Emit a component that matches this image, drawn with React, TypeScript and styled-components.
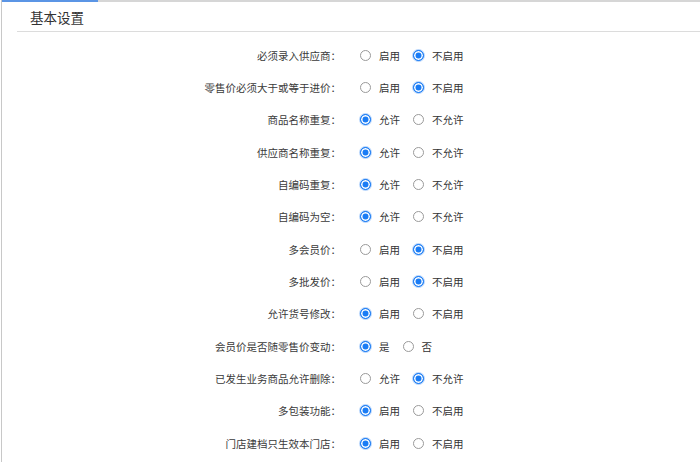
import React from "react";
import styled, { createGlobalStyle } from "styled-components";

const GlobalStyle = createGlobalStyle`
  html, body {
    margin: 0;
    padding: 0;
    background: #fff;
  }
  body {
    font-family: "Microsoft YaHei", "Noto Sans CJK SC", "Liberation Sans", sans-serif;
    color: #333;
  }
`;

interface Setting {
  label: string;
  options: string[];
  checked: number;
}

const settings: Setting[] = [
  { label: "必须录入供应商：", options: ["启用", "不启用"], checked: 1 },
  { label: "零售价必须大于或等于进价：", options: ["启用", "不启用"], checked: 1 },
  { label: "商品名称重复：", options: ["允许", "不允许"], checked: 0 },
  { label: "供应商名称重复：", options: ["允许", "不允许"], checked: 0 },
  { label: "自编码重复：", options: ["允许", "不允许"], checked: 0 },
  { label: "自编码为空：", options: ["允许", "不允许"], checked: 0 },
  { label: "多会员价：", options: ["启用", "不启用"], checked: 1 },
  { label: "多批发价：", options: ["启用", "不启用"], checked: 1 },
  { label: "允许货号修改：", options: ["启用", "不启用"], checked: 0 },
  { label: "会员价是否随零售价变动：", options: ["是", "否"], checked: 0 },
  { label: "已发生业务商品允许删除：", options: ["允许", "不允许"], checked: 1 },
  { label: "多包装功能：", options: ["启用", "不启用"], checked: 0 },
  { label: "门店建档只生效本门店：", options: ["启用", "不启用"], checked: 0 },
];

const App = () => {
  return (
    <>
      <GlobalStyle />
      <Panel>
        <TabBar>
          <ActiveTab />
        </TabBar>
        <Header>
          <Title>基本设置</Title>
        </Header>
        <Form>
          {settings.map((s) => (
            <Row key={s.label}>
              <Label>{s.label}</Label>
              <Options>
                {s.options.map((o, i) => (
                  <Option key={o}>
                    <Radio checked={i === s.checked} />
                    <OptionText>{o}</OptionText>
                  </Option>
                ))}
              </Options>
            </Row>
          ))}
        </Form>
      </Panel>
    </>
  );
};

export default App;

const Panel = styled.div`
  width: 700px;
  height: 462px;
  box-sizing: border-box;
  border-left: 1px solid #c8c8c8;
  margin-left: 1px;
  overflow: hidden;
`;

const TabBar = styled.div`
  height: 2px;
  background: #d6d6d6;
  display: flex;
`;

const ActiveTab = styled.div`
  width: 96px;
  height: 2px;
  background: #5b95e5;
`;

const Header = styled.div`
  margin-left: 15px;
  height: 29px;
  border-bottom: 1px solid #dcdcdc;
  display: flex;
  align-items: center;
`;

const Title = styled.span`
  margin-left: 13px;
  font-size: 13.5px;
  color: #333;
  line-height: 1;
  padding-top: 2px;
`;

const Form = styled.div`
  padding-top: 7px;
  display: flex;
  flex-direction: column;
`;

const Row = styled.div`
  height: 32.35px;
  display: grid;
  grid-template-columns: 339px 1fr;
  align-items: center;
`;

const Label = styled.span`
  text-align: right;
  font-size: 10.5px;
  color: #3a3a3a;
  white-space: nowrap;
`;

const Options = styled.div`
  display: flex;
  align-items: center;
  padding-left: 19px;
  gap: 13px;
`;

const Option = styled.label`
  display: flex;
  align-items: center;
  gap: 8px;
`;

const Radio = styled.span<{ checked: boolean }>`
  width: 11px;
  height: 11px;
  box-sizing: border-box;
  border-radius: 50%;
  border: 1px solid ${(p) => (p.checked ? "#1a7cf5" : "#9a9a9a")};
  background: ${(p) => (p.checked ? "#1a7cf5" : "#fff")};
  box-shadow: ${(p) => (p.checked ? "inset 0 0 0 1.5px #fff, 0 0 0 1px #b9d6fb" : "none")};
`;

const OptionText = styled.span`
  font-size: 10.5px;
  color: #333;
  white-space: nowrap;
`;
